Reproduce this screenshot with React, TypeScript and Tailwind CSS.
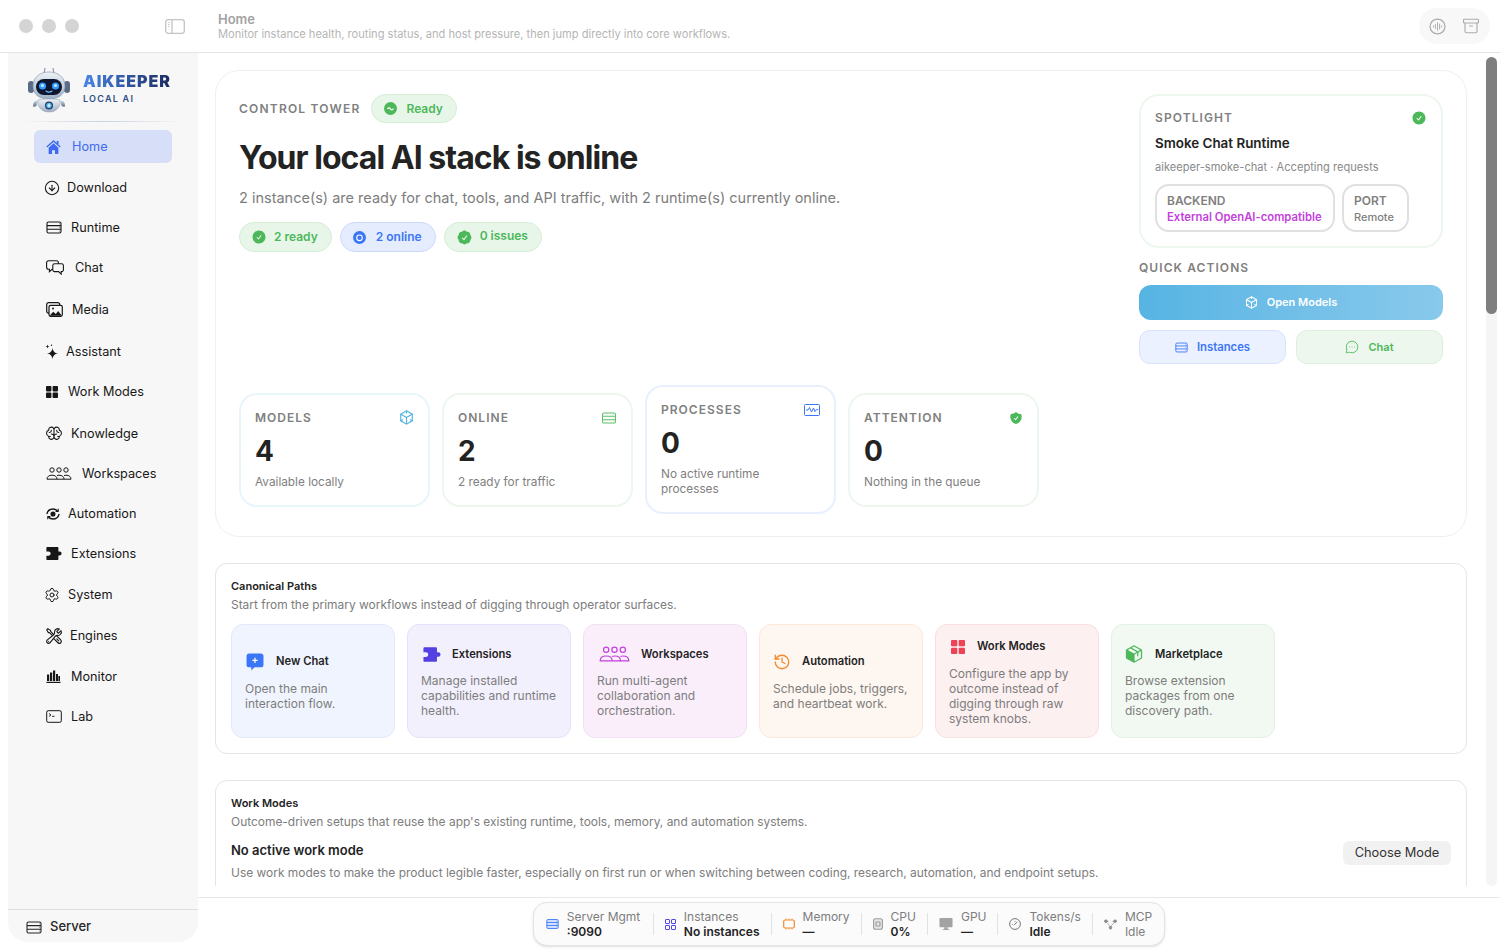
import type { ReactNode } from 'react';
import { Archive, CircleArrowDown, History, MessageCircleMore, Settings } from 'lucide-react';
import { HiCheckBadge, HiCheckCircle, HiShieldCheck, HiOutlineWrenchScrewdriver } from 'react-icons/hi2';
import { PiBrain, PiPackageFill } from 'react-icons/pi';

type IconProps = { className?: string };

function ServerIcon({ className }: IconProps) {
  return (
    <svg viewBox="0 0 16 13" fill="none" stroke="currentColor" strokeWidth="1.1" className={className}>
      <rect x="1" y="1" width="14" height="11" rx="1.5" />
      <path d="M1 4.6h14M1 8.3h14" />
      <path d="M13 2.8h.4M13 6.4h.4M13 10.1h.4" />
    </svg>
  );
}

function HomeIcon({ className }: IconProps) {
  return (
    <svg viewBox="0 0 16 15" fill="currentColor" className={className}>
      <path d="M.8 7.600L8 1l7.200 6.600" fill="none" stroke="currentColor" strokeWidth="1.400" />
      <rect x="11.400" y="1" width="2" height="3.500" />
      <path d="M2.800 8.200L8 3.500l5.200 4.700v6.800H9.600v-4H6.400v4H2.800z" />
    </svg>
  );
}

function ChatsIcon({ className }: IconProps) {
  return (
    <svg viewBox="0 0 18 15" stroke="currentColor" strokeWidth="1.100" fill="none" className={className}>
      <path d="M2.600.7h7.800a2 2 0 0 1 2 2v4.600a2 2 0 0 1-2 2H6l-2.600 2.400V9.300h-.8a2 2 0 0 1-2-2V2.700a2 2 0 0 1 2-2z" />
      <path className="fill-[#f7f7f7]" d="M8.600 3.800h7a1.800 1.800 0 0 1 1.800 1.800v4.200a1.800 1.800 0 0 1-1.800 1.800h-.4v2.500l-2.600-2.500h-4a1.800 1.800 0 0 1-1.800-1.800V5.600a1.800 1.800 0 0 1 1.800-1.800z" />
    </svg>
  );
}

function MediaIcon({ className }: IconProps) {
  return (
    <svg viewBox="0 0 17 15" fill="none" stroke="currentColor" strokeWidth="1.200" className={className}>
      <rect x="0.700" y="0.700" width="13" height="10.500" rx="2" />
      <rect x="3" y="3.400" width="13.300" height="10.900" rx="1.500" className="fill-[#f7f7f7]" />
      <path d="M3.500 13.800l3.700-4 2.600 2.300 2.400-3 3.700 4.700z" fill="currentColor" stroke="none" />
      <circle cx="7" cy="6.500" r="1" fill="currentColor" stroke="none" />
    </svg>
  );
}

function SparkleIcon({ className }: IconProps) {
  return (
    <svg viewBox="0 0 13 16" fill="currentColor" className={className}>
      <path d="M7.500 4c.6 3.500 2 4.900 5.500 5.500-3.500.6-4.900 2-5.500 5.500-.6-3.500-2-4.900-5.500-5.500 3.500-.6 4.900-2 5.500-5.500z" />
      <path d="M2.500.5c.2 1.300.7 1.800 2 2-1.300.2-1.800.7-2 2-.2-1.300-.7-1.800-2-2 1.300-.2 1.800-.7 2-2z" />
      <circle cx="6.500" cy="1.200" r="0.700" />
    </svg>
  );
}

function GridFillIcon({ className }: IconProps) {
  return (
    <svg viewBox="0 0 12 12" fill="currentColor" className={className}>
      <rect x="0" y="0" width="5.4" height="5.4" rx="0.8" />
      <rect x="6.6" y="0" width="5.4" height="5.4" rx="0.8" />
      <rect x="0" y="6.6" width="5.4" height="5.4" rx="0.8" />
      <rect x="6.6" y="6.6" width="5.4" height="5.4" rx="0.8" />
    </svg>
  );
}

function PeopleIcon({ className }: IconProps) {
  return (
    <svg viewBox="0 0 26 13" fill="none" stroke="currentColor" strokeWidth="1" className={className}>
      <circle cx="6" cy="3" r="2.2" />
      <circle cx="13" cy="3" r="2.2" />
      <circle cx="20" cy="3" r="2.2" />
      <path d="M1 12.2c0-2.6 2-4 5-4s5 1.4 5 4z" />
      <path d="M11 8.6c.7-.3 1.3-.4 2-.4 3 0 5 1.4 5 4h-7" />
      <path d="M18 8.6c.7-.3 1.3-.4 2-.4 3 0 5 1.4 5 4h-7" />
    </svg>
  );
}

function AutomationIcon({ className }: IconProps) {
  return (
    <svg viewBox="0 0 16 16" fill="none" stroke="currentColor" strokeWidth="1.300" className={className}>
      <path d="M1.800 8c.8-3 3.200-5 6.200-5 1.800 0 3.400.7 4.500 2" />
      <path d="M14.200 8c-.8 3-3.200 5-6.200 5-1.800 0-3.400-.7-4.500-2" />
      <circle cx="8" cy="8" r="1.900" fill="currentColor" />
      <path d="M13.200 2.800v2.600h-2.600M2.800 13.200v-2.600h2.600" strokeWidth="1.100" />
    </svg>
  );
}

function PuzzleIcon({ className }: IconProps) {
  return (
    <svg viewBox="0 0 16 13" fill="currentColor" className={className}>
      <path d="M1.400 0h10c.6 0 1 .4 1 1v3.400h1.100a2.100 2.100 0 0 1 0 4.200h-1.100V12c0 .6-.4 1-1 1h-10c-.6 0-1-.4-1-1V8.700h2.200a2.100 2.100 0 0 0 0-4.200H.4V1c0-.6.4-1 1-1z" />
    </svg>
  );
}

function BarsIcon({ className }: IconProps) {
  return (
    <svg viewBox="0 0 15 13" fill="currentColor" className={className}>
      <rect x="1" y="4.500" width="2.200" height="6.500" />
      <rect x="4" y="2.500" width="2.200" height="8.500" />
      <rect x="7" y="0.500" width="2.200" height="10.500" />
      <rect x="10" y="4" width="2" height="7" />
      <rect x="12.400" y="6" width="1.600" height="5" />
      <rect x="0.500" y="11.800" width="14" height="1.200" />
    </svg>
  );
}

function TerminalIcon({ className }: IconProps) {
  return (
    <svg viewBox="0 0 16 13" fill="none" stroke="currentColor" strokeWidth="1" className={className}>
      <rect x="0.700" y="0.700" width="14.600" height="11.600" rx="1.500" />
      <path d="M3 3.500l2 1.500-2 1.500M6 6.300h2.500" strokeWidth="0.900" />
    </svg>
  );
}

function HexIcon({ className }: IconProps) {
  return (
    <svg viewBox="0 0 14 14" fill="none" stroke="currentColor" strokeWidth="1.100" className={className}>
      <path d="M7 .8l5.400 3.100v6.200L7 13.200 1.600 10.100V3.900z" />
      <path d="M7 7L1.800 4M7 7l5.200-3M7 7v6" />
      <path d="M7 .8v2.500M1.600 10.100l2.200-1.300M12.400 10.100l-2.200-1.300" />
    </svg>
  );
}

function SidebarToggleIcon({ className }: IconProps) {
  return (
    <svg viewBox="0 0 20 15" fill="none" stroke="currentColor" strokeWidth="1.300" className={className}>
      <rect x="0.700" y="0.700" width="18.600" height="13.600" rx="2.500" />
      <path d="M7 .7v13.600" />
      <path d="M3 3.500h1.500M3 5.500h1.500M3 7.500h1.500" strokeWidth="0.900" />
    </svg>
  );
}

function WaveCircleIcon({ className }: IconProps) {
  return (
    <svg viewBox="0 0 18 18" fill="none" stroke="currentColor" strokeWidth="1.300" className={className}>
      <circle cx="9" cy="9" r="7.900" />
      <path d="M4.700 8v2M6.800 6.500v5M9 4.500v9M11.200 6v6M13.300 8v2" strokeWidth="1" />
    </svg>
  );
}

function RobotLogo() {
  return (
    <svg viewBox="0 0 44 46" className="w-[44px] h-[46px] shrink-0">
      <defs>
        <linearGradient id="shell" x1="0" y1="0" x2="0" y2="1">
          <stop offset="0" stopColor="#eef2f7" />
          <stop offset="1" stopColor="#9fb0c6" />
        </linearGradient>
        <linearGradient id="arm" x1="0" y1="0" x2="0" y2="1">
          <stop offset="0" stopColor="#c8d3e0" />
          <stop offset="1" stopColor="#5c6d86" />
        </linearGradient>
      </defs>
      <path d="M18 1l-1 6h10l-1-6" fill="none" stroke="#8d9bb0" strokeWidth="1.200" />
      <rect x="1" y="14" width="6" height="12" rx="3" fill="#5a6b85" />
      <rect x="37" y="14" width="6" height="12" rx="3" fill="#5a6b85" />
      <path d="M6 19c0-9 7-14 16-14s16 5 16 14-7 13-16 13S6 28 6 19z" fill="url(#shell)" stroke="#7f90a8" strokeWidth="0.600" />
      <rect x="9" y="12" width="26" height="16" rx="8" fill="#0f1730" />
      <circle cx="15.500" cy="19" r="3.600" fill="#2f9bff" />
      <circle cx="28.500" cy="19" r="3.600" fill="#2f9bff" />
      <circle cx="15.500" cy="18.500" r="1.600" fill="#c4e8ff" />
      <circle cx="28.500" cy="18.500" r="1.600" fill="#c4e8ff" />
      <path d="M19 24c1.800 1.300 4.200 1.300 6 0" fill="none" stroke="#6cc2ff" strokeWidth="1.100" strokeLinecap="round" />
      <path d="M8 34c-2 2-2.500 4-1.500 6l3-1 1-5z" fill="url(#arm)" />
      <path d="M36 34c2 2 2.500 4 1.500 6l-3-1-1-5z" fill="url(#arm)" />
      <path d="M11 33c3-1.500 19-1.500 22 0 1 6-3 12-11 12s-12-6-11-12z" fill="url(#shell)" stroke="#7f90a8" strokeWidth="0.500" />
      <circle cx="22" cy="38.500" r="4" fill="#2a3a58" />
      <circle cx="22" cy="38.500" r="2.700" fill="#54c0ff" />
      <circle cx="22" cy="38.500" r="1.300" fill="#dff4ff" />
    </svg>
  );
}

const navItems: { label: string; icon: ReactNode; gap: string; mt: string }[] = [
  { label: 'Download', icon: <CircleArrowDown className="-ml-[2px] w-[16px] h-[16px]" strokeWidth={1.6} />, gap: 'gap-[7px]', mt: 'mt-[8px]' },
  { label: 'Runtime', icon: <ServerIcon className="w-[16px] h-[13px]" />, gap: 'gap-[9px]', mt: 'mt-[7px]' },
  { label: 'Chat', icon: <ChatsIcon className="w-[18px] h-[15px]" />, gap: 'gap-[11px]', mt: 'mt-[7px]' },
  { label: 'Media', icon: <MediaIcon className="w-[17px] h-[15px]" />, gap: 'gap-[9px]', mt: 'mt-[9px]' },
  { label: 'Assistant', icon: <SparkleIcon className="-ml-[1px] w-[13px] h-[16px]" />, gap: 'gap-[8px]', mt: 'mt-[9px]' },
  { label: 'Work Modes', icon: <GridFillIcon className="w-[12px] h-[12px]" />, gap: 'gap-[10px]', mt: 'mt-[7px]' },
  { label: 'Knowledge', icon: <PiBrain className="-ml-[1px] w-[18px] h-[17px]" />, gap: 'gap-[8px]', mt: 'mt-[9px]' },
  { label: 'Workspaces', icon: <PeopleIcon className="w-[26px] h-[13px]" />, gap: 'gap-[10px]', mt: 'mt-[7px]' },
  { label: 'Automation', icon: <AutomationIcon className="-ml-[1px] w-[16px] h-[16px]" />, gap: 'gap-[7px]', mt: 'mt-[7px]' },
  { label: 'Extensions', icon: <PuzzleIcon className="w-[16px] h-[13px]" />, gap: 'gap-[9px]', mt: 'mt-[7px]' },
  { label: 'System', icon: <Settings className="-ml-[2px] w-[16px] h-[16px]" strokeWidth={1.5} />, gap: 'gap-[8px]', mt: 'mt-[8px]' },
  { label: 'Engines', icon: <HiOutlineWrenchScrewdriver className="-ml-[1px] w-[18px] h-[18px]" />, gap: 'gap-[7px]', mt: 'mt-[8px]' },
  { label: 'Monitor', icon: <BarsIcon className="w-[15px] h-[13px]" />, gap: 'gap-[10px]', mt: 'mt-[8px]' },
  { label: 'Lab', icon: <TerminalIcon className="w-[16px] h-[13px]" />, gap: 'gap-[9px]', mt: 'mt-[7px]' },
];

function Sidebar() {
  return (
    <aside className="ml-2 mb-2 w-[190px] shrink-0 bg-[#f7f7f7] rounded-b-[20px] flex flex-col">
      <div className="h-[68px] pl-[19px] pt-[14px] flex items-start gap-[12px]">
        <RobotLogo />
        <div className="pt-[4px]">
          <div className="text-[16px] leading-[20px] font-black tracking-[0.06em] bg-gradient-to-r from-[#4a86e6] to-[#1b2d63] bg-clip-text text-transparent">AIKEEPER</div>
          <div className="text-[9px] leading-[14px] mt-[1px] font-semibold tracking-[0.14em] text-[#2f4d84]">LOCAL AI</div>
        </div>
      </div>
      <div className="mx-[14px] h-px bg-gradient-to-r from-transparent via-[#c9d2de] to-transparent" />
      <nav className="pl-[26px] pr-[26px] pt-[8px] flex flex-col flex-1">
        <div className="h-[33px] rounded-[6px] bg-[#d6dff7] text-[#3f6af0] flex items-center gap-[11px] pl-[12px] text-[12.7px]">
          <HomeIcon className="w-[15px] h-[14px]" />
          <span className="pt-px">Home</span>
        </div>
        {navItems.map((item) => (
          <div key={item.label} className={`h-[33px] ${item.mt} ${item.gap} pl-[12px] flex items-center text-[12.7px] text-[#171717] whitespace-nowrap`}>
            {item.icon}
            <span>{item.label}</span>
          </div>
        ))}
      </nav>
      <div className="h-[33px] border-t border-[#dedede] pl-[18px] pt-[2px] flex items-center gap-[8px] text-[13px] font-medium text-[#262626]">
        <ServerIcon className="w-[16px] h-[13px]" />
        <span>Server</span>
      </div>
    </aside>
  );
}

function Chip({ icon, label, tone, nudge }: { icon: ReactNode; label: string; tone: 'green' | 'blue'; nudge?: boolean }) {
  const styles = tone === 'green' ? 'bg-[#e8f6e9] border-[#d4eed6] text-[#4cb85a]' : 'bg-[#e4ecfd] border-[#cbdafc] text-[#3b76f6]';
  return (
    <div className={`h-[30px] rounded-full border pl-[12px] pr-[13px] flex items-center text-[12px] font-semibold ${styles}`}>
      {icon}
      <span className={nudge ? '-mt-[2px]' : ''}>{label}</span>
    </div>
  );
}

function StatCard({ label, value, note, icon, border }: { label: string; value: string; note: string; icon: ReactNode; border: string }) {
  return (
    <div className={`rounded-[18px] border-2 ${border} bg-white px-[14px] pt-[13px] pb-[15px]`}>
      <div className="flex items-center justify-between h-[20px]">
        <span className="text-[12px] font-semibold tracking-[0.085em] text-[#808080]">{label}</span>
        {icon}
      </div>
      <div className="text-[28px] leading-[34px] font-bold text-[#232323] mt-[6px]">{value}</div>
      <div className="text-[11.8px] leading-[15px] text-[#808080] mt-[7px]">{note}</div>
    </div>
  );
}

function PathCard({ title, text, icon, tone }: { title: string; text: string; icon: ReactNode; tone: string }) {
  return (
    <div className={`w-[164px] h-[114px] rounded-[12px] border ${tone} px-[13px] flex flex-col justify-center`}>
      <div className="flex items-center gap-[12px] h-[20px]">
        {icon}
        <span className="text-[11.2px] font-semibold text-[#232323]">{title}</span>
      </div>
      <p className="mt-[9px] text-[12px] leading-[15px] text-[#7d7d7d]">{text}</p>
    </div>
  );
}

function StatusItem({ icon, label, value, muted, minW }: { icon: ReactNode; label: string; value: string; muted?: boolean; minW?: string }) {
  return (
    <div className="flex items-center gap-[8px]">
      {icon}
      <div className={`text-[12px] leading-[15px] whitespace-nowrap ${minW ?? ''}`}>
        <div className="text-[#7d7d7d]">{label}</div>
        <div className={muted ? 'text-[#7d7d7d]' : 'font-semibold text-[#232323]'}>{value}</div>
      </div>
    </div>
  );
}

function Divider() {
  return <div className="w-px h-[22px] bg-[#e2e2e2]" />;
}

function StatusBar() {
  return (
    <div className="h-[44px] rounded-[14px] border border-[#e4e4e4] bg-[#fbfbfb] shadow-sm px-[12px] flex items-center gap-[11px]">
      <StatusItem icon={<ServerIcon className="w-[13px] h-[14px] text-[#3b76f6] fill-[#d5e3fd]" />} label="Server Mgmt" value=":9090" minW="min-w-[75px]" />
      <Divider />
      <StatusItem
        icon={
          <svg viewBox="0 0 11 11" fill="none" stroke="#4f46e5" strokeWidth="1" className="w-[11px] h-[11px]">
            <rect x="0.500" y="0.500" width="4" height="4" rx="0.500" />
            <rect x="6.500" y="0.500" width="4" height="4" rx="0.500" />
            <rect x="0.500" y="6.500" width="4" height="4" rx="0.500" />
            <rect x="6.500" y="6.500" width="4" height="4" rx="0.500" />
          </svg>
        }
        label="Instances"
        value="No instances"
      />
      <Divider />
      <StatusItem
        icon={
          <svg viewBox="0 0 12 12" fill="none" stroke="#f08a2c" strokeWidth="1.200" className="w-[12px] h-[12px]">
            <rect x="0.700" y="2" width="10.600" height="8" rx="1.500" />
            <path d="M3 .5V2M6 .5V2M9 .5V2M3 10v1.500M6 10v1.500M9 10v1.500" strokeWidth="0.700" />
          </svg>
        }
        label="Memory"
        value="—"
      />
      <Divider />
      <StatusItem
        icon={
          <svg viewBox="0 0 10 12" fill="none" stroke="#9a9a9a" strokeWidth="1.100" className="w-[10px] h-[12px]">
            <rect x="0.600" y="0.800" width="8.800" height="10.400" rx="2" fill="#e6e6e6" />
            <rect x="3" y="4" width="4" height="4" rx="0.500" />
          </svg>
        }
        label="CPU"
        value="0%"
      />
      <Divider />
      <StatusItem
        icon={
          <svg viewBox="0 0 15 14" className="w-[14px] h-[14px]" fill="#a3a3a3">
            <rect x="0.500" y="0.500" width="14" height="10" rx="1" />
            <rect x="5.500" y="10.500" width="4" height="2" />
            <rect x="4" y="12.500" width="7" height="1" />
          </svg>
        }
        label="GPU"
        value="—"
      />
      <Divider />
      <StatusItem
        icon={
          <svg viewBox="0 0 12 12" fill="none" stroke="#777" strokeWidth="1" className="w-[12px] h-[12px]">
            <circle cx="6" cy="6" r="5.400" />
            <path d="M5 7.200L8.300 3.800M2.800 6.300h.9M6 2.900v.8" />
          </svg>
        }
        label="Tokens/s"
        value="Idle"
      />
      <Divider />
      <StatusItem
        icon={
          <svg viewBox="0 0 14 13" className="w-[13px] h-[13px]" fill="#8a8a8a" stroke="#8a8a8a" strokeWidth="0.700">
            <path d="M2 3l5 6 5-6M2 3h3M12 3H9M7 9v2" fill="none" />
            <circle cx="2" cy="3" r="1.500" />
            <circle cx="12" cy="3" r="1.500" />
            <circle cx="7" cy="10" r="1.500" />
          </svg>
        }
        label="MCP"
        value="Idle"
        muted
      />
    </div>
  );
}

export default function App() {
  return (
    <div className="h-screen w-full overflow-hidden bg-white flex flex-col font-['Inter',sans-serif]">
      <header className="h-[53px] shrink-0 border-b border-[#e4e4e4] flex items-center">
        <div className="pl-[19px] flex items-center gap-[9px]">
          <span className="w-[14px] h-[14px] rounded-full bg-[#d4d4d4]" />
          <span className="w-[14px] h-[14px] rounded-full bg-[#d4d4d4]" />
          <span className="w-[14px] h-[14px] rounded-full bg-[#d4d4d4]" />
        </div>
        <SidebarToggleIcon className="ml-[86px] w-[20px] h-[15px] text-[#c4c4c4]" />
        <div className="ml-[33px] flex-1 pt-[2px]">
          <div className="text-[13px] leading-[15px] font-semibold text-[#a3a3a3]">Home</div>
          <div className="text-[11.1px] leading-[15px] text-[#b5b5b5]">Monitor instance health, routing status, and host pressure, then jump directly into core workflows.</div>
        </div>
        <div className="mr-[10px] w-[71px] h-[36px] rounded-full bg-[#f8f8f8] flex items-center justify-center gap-[16px]">
          <WaveCircleIcon className="w-[17px] h-[17px] text-[#ababab]" />
          <Archive className="w-[18px] h-[18px] text-[#ababab]" strokeWidth={1.5} />
        </div>
      </header>

      <div className="flex flex-1 min-h-0">
        <Sidebar />

        <main className="relative flex-1 min-w-0 flex flex-col">
          <div className="flex-1 min-h-0 overflow-hidden pl-[17px] pr-[33px] pt-[17px] mb-[11px]">
            <section className="rounded-[24px] border border-[#efefef] bg-white px-[23px] pt-[23px] pb-[22px]">
              <div className="flex justify-between">
                <div>
                  <div className="flex items-center gap-[11px]">
                    <span className="text-[12px] font-semibold tracking-[0.1em] text-[#808080]">CONTROL TOWER</span>
                    <div className="h-[29px] rounded-full bg-[#e8f6e9] border border-[#d4eed6] pl-[12px] pr-[13px] flex items-center gap-[9px] text-[12px] font-semibold text-[#4cb85a]">
                      <svg viewBox="0 0 13 13" className="w-[13px] h-[13px]">
                        <circle cx="6.500" cy="6.500" r="6.500" fill="#4cb85a" />
                        <path d="M3.500 7c1-1.500 2-1.500 3 0s2 1 3-.5" fill="none" stroke="#fff" strokeWidth="1.200" />
                      </svg>
                      <span>Ready</span>
                    </div>
                  </div>
                  <h1 className="mt-[15px] text-[32px] leading-[40px] font-bold tracking-[-0.03em] text-[#232323]">Your local AI stack is online</h1>
                  <p className="mt-[10px] text-[14.5px] leading-[20px] text-[#7d7d7d]">2 instance(s) are ready for chat, tools, and API traffic, with 2 runtime(s) currently online.</p>
                  <div className="mt-[14px] flex items-center gap-[8px]">
                    <Chip tone="green" label="2 ready" icon={<HiCheckCircle className="-ml-[1px] mr-[7px] w-[16px] h-[16px]" />} />
                    <Chip
                      tone="blue"
                      label="2 online"
                      icon={
                        <svg viewBox="0 0 13 13" className="mr-[10px] w-[13px] h-[13px]">
                          <circle cx="6.500" cy="6.500" r="6.500" fill="#3b76f6" />
                          <circle cx="6.500" cy="6.800" r="2.800" fill="none" stroke="#fff" strokeWidth="1.100" />
                        </svg>
                      }
                    />
                    <Chip tone="green" label="0 issues" nudge icon={<HiCheckBadge className="-ml-[1px] mr-[7px] w-[17px] h-[17px]" />} />
                  </div>
                </div>

                <div className="w-[304px] shrink-0">
                  <div className="rounded-[20px] border-2 border-[#edf7ee] px-[14px] pt-[13px] h-[154px]">
                    <div className="flex items-center justify-between">
                      <span className="text-[12px] font-semibold tracking-[0.09em] text-[#808080]">SPOTLIGHT</span>
                      <HiCheckCircle className="w-[16px] h-[16px] text-[#4cb85a]" />
                    </div>
                    <div className="mt-[7px] text-[13.4px] leading-[18px] font-semibold text-[#232323]">Smoke Chat Runtime</div>
                    <div className="mt-[8px] text-[11.1px] leading-[15px] text-[#8a8a8a]">aikeeper-smoke-chat · Accepting requests</div>
                    <div className="mt-[9px] flex gap-[7px]">
                      <div className="w-[180px] h-[48px] rounded-[14px] border-2 border-[#e0e0e0] px-[10px] pt-[1px] flex flex-col justify-center">
                        <span className="text-[12px] leading-[16px] font-semibold text-[#808080]">BACKEND</span>
                        <span className="text-[11.3px] leading-[16px] font-semibold text-[#c43fdc] whitespace-nowrap">External OpenAI-compatible</span>
                      </div>
                      <div className="w-[67px] h-[48px] rounded-[14px] border-2 border-[#e0e0e0] px-[10px] pt-[1px] flex flex-col justify-center">
                        <span className="text-[12px] leading-[16px] font-semibold text-[#808080]">PORT</span>
                        <span className="text-[11px] leading-[16px] font-medium text-[#808080]">Remote</span>
                      </div>
                    </div>
                  </div>
                  <div className="mt-[11px] text-[12px] leading-[18px] font-semibold tracking-[0.09em] text-[#808080]">QUICK ACTIONS</div>
                  <div className="mt-[8px] h-[35px] rounded-[12px] bg-gradient-to-r from-[#56b4e3] to-[#88c9ec] text-white flex items-center justify-center gap-[9px] text-[11px] font-semibold">
                    <HexIcon className="w-[13px] h-[13px]" />
                    <span>Open Models</span>
                  </div>
                  <div className="mt-[10px] grid grid-cols-2 gap-[10px]">
                    <div className="h-[34px] rounded-[11px] bg-[#ebf1fe] border border-[#d7e3fd] text-[#3b76f6] flex items-center justify-center gap-[9px] text-[11.3px] font-semibold">
                      <ServerIcon className="w-[13px] h-[11px]" />
                      <span>Instances</span>
                    </div>
                    <div className="h-[34px] rounded-[11px] bg-[#edf7ee] border border-[#dcf0dd] text-[#4cb85a] flex items-center justify-center gap-[9px] text-[11px] font-semibold">
                      <MessageCircleMore className="w-[14px] h-[14px]" strokeWidth={1.5} />
                      <span>Chat</span>
                    </div>
                  </div>
                </div>
              </div>

              <div className="mt-[21px] w-[800px] grid grid-cols-4 gap-[12px] items-center">
                <StatCard label="MODELS" value="4" note="Available locally" border="border-[#e8f5fb]" icon={<HexIcon className="w-[15px] h-[15px] text-[#56b4e3]" />} />
                <StatCard label="ONLINE" value="2" note="2 ready for traffic" border="border-[#edf7ee]" icon={<ServerIcon className="w-[16px] h-[12px] text-[#5cc068]" />} />
                <StatCard
                  label="PROCESSES"
                  value="0"
                  note="No active runtime processes"
                  border="border-[#e8effe]"
                  icon={
                    <svg viewBox="0 0 16 12" fill="none" stroke="#3b76f6" strokeWidth="1" className="w-[16px] h-[12px]">
                      <rect x="0.500" y="0.500" width="15" height="11" rx="1" />
                      <path d="M2 6h2l1.500-2.500L7.500 8 9.500 4 11 7.500 12.500 5.500H14" />
                    </svg>
                  }
                />
                <StatCard label="ATTENTION" value="0" note="Nothing in the queue" border="border-[#edf7ee]" icon={<HiShieldCheck className="w-[14px] h-[14px] text-[#4cb85a]" />} />
              </div>
            </section>

            <section className="mt-[26px] rounded-[12px] border border-[#e4e4e4] bg-white p-[15px]">
              <div className="text-[11px] leading-[14px] font-semibold text-[#232323]">Canonical Paths</div>
              <div className="mt-[4px] text-[11.95px] leading-[16px] text-[#7d7d7d]">Start from the primary workflows instead of digging through operator surfaces.</div>
              <div className="mt-[11px] flex gap-[12px]">
                <PathCard
                  title="New Chat"
                  text="Open the main interaction flow."
                  tone="bg-[#f0f4fe] border-[#e2e9fb]"
                  icon={
                    <svg viewBox="0 0 17 17" className="ml-[1px] w-[18px] h-[18px]">
                      <path d="M3 .5h11a2.500 2.500 0 0 1 2.500 2.500v8a2.500 2.500 0 0 1-2.500 2.500H8l-3 3v-3H3A2.500 2.500 0 0 1 .5 11V3A2.500 2.500 0 0 1 3 .5z" fill="#3b76f6" />
                      <path d="M8.500 4.500v5M6 7h5" stroke="#fff" strokeWidth="1.200" />
                    </svg>
                  }
                />
                <PathCard
                  title="Extensions"
                  text="Manage installed capabilities and runtime health."
                  tone="bg-[#f3f0fd] border-[#e6e1fa]"
                  icon={<PuzzleIcon className="ml-[2px] -mr-[1px] w-[18px] h-[15px] text-[#5240e0]" />}
                />
                <PathCard
                  title="Workspaces"
                  text="Run multi-agent collaboration and orchestration."
                  tone="bg-[#faeefb] border-[#f1e0f4]"
                  icon={<PeopleIcon className="ml-[2px] -mr-[1px] w-[31px] h-[16px] text-[#c43fdc]" />}
                />
                <PathCard
                  title="Automation"
                  text="Schedule jobs, triggers, and heartbeat work."
                  tone="bg-[#fef6f0] border-[#fbe9dd]"
                  icon={<History className="-mr-[1px] w-[18px] h-[18px] text-[#f08a2c]" strokeWidth={1.7} />}
                />
                <PathCard
                  title="Work Modes"
                  text="Configure the app by outcome instead of digging through raw system knobs."
                  tone="bg-[#fcf0f1] border-[#f8dfe1]"
                  icon={<GridFillIcon className="ml-[2px] w-[14px] h-[14px] text-[#ee4256]" />}
                />
                <PathCard
                  title="Marketplace"
                  text="Browse extension packages from one discovery path."
                  tone="bg-[#f2f9f2] border-[#e2f2e3]"
                  icon={<PiPackageFill className="-ml-[1px] -mr-[1px] w-[20px] h-[20px] text-[#4cb85a]" />}
                />
              </div>
            </section>

            <section className="mt-[26px] rounded-[12px] border border-[#e4e4e4] bg-white p-[15px] relative">
              <div className="text-[11px] leading-[14px] font-semibold text-[#232323]">Work Modes</div>
              <div className="mt-[4px] text-[11.95px] leading-[16px] text-[#7d7d7d]">Outcome-driven setups that reuse the app's existing runtime, tools, memory, and automation systems.</div>
              <div className="mt-[11px] flex items-start justify-between">
                <div>
                  <div className="text-[13px] leading-[18px] font-semibold text-[#232323]">No active work mode</div>
                  <div className="mt-[6px] text-[11.95px] leading-[16px] text-[#7d7d7d]">Use work modes to make the product legible faster, especially on first run or when switching between coding, research, automation, and endpoint setups.</div>
                </div>
                <div className="w-[108px] h-[24px] rounded-[6px] bg-[#f1f1f1] flex items-center justify-center text-[12.8px] text-[#333]">Choose Mode</div>
              </div>
            </section>
          </div>

          <footer className="h-[53px] shrink-0 border-t border-[#e8e8e8] pt-[4px] flex justify-center">
            <StatusBar />
          </footer>

          {/* overlay scrollbar */}
          <div className="absolute right-[3px] top-[4px] h-[829px] w-[11px] rounded-full bg-[#f5f5f5]">
            <div className="h-[257px] rounded-full bg-[#7f7f7f]" />
          </div>
        </main>
      </div>
    </div>
  );
}
